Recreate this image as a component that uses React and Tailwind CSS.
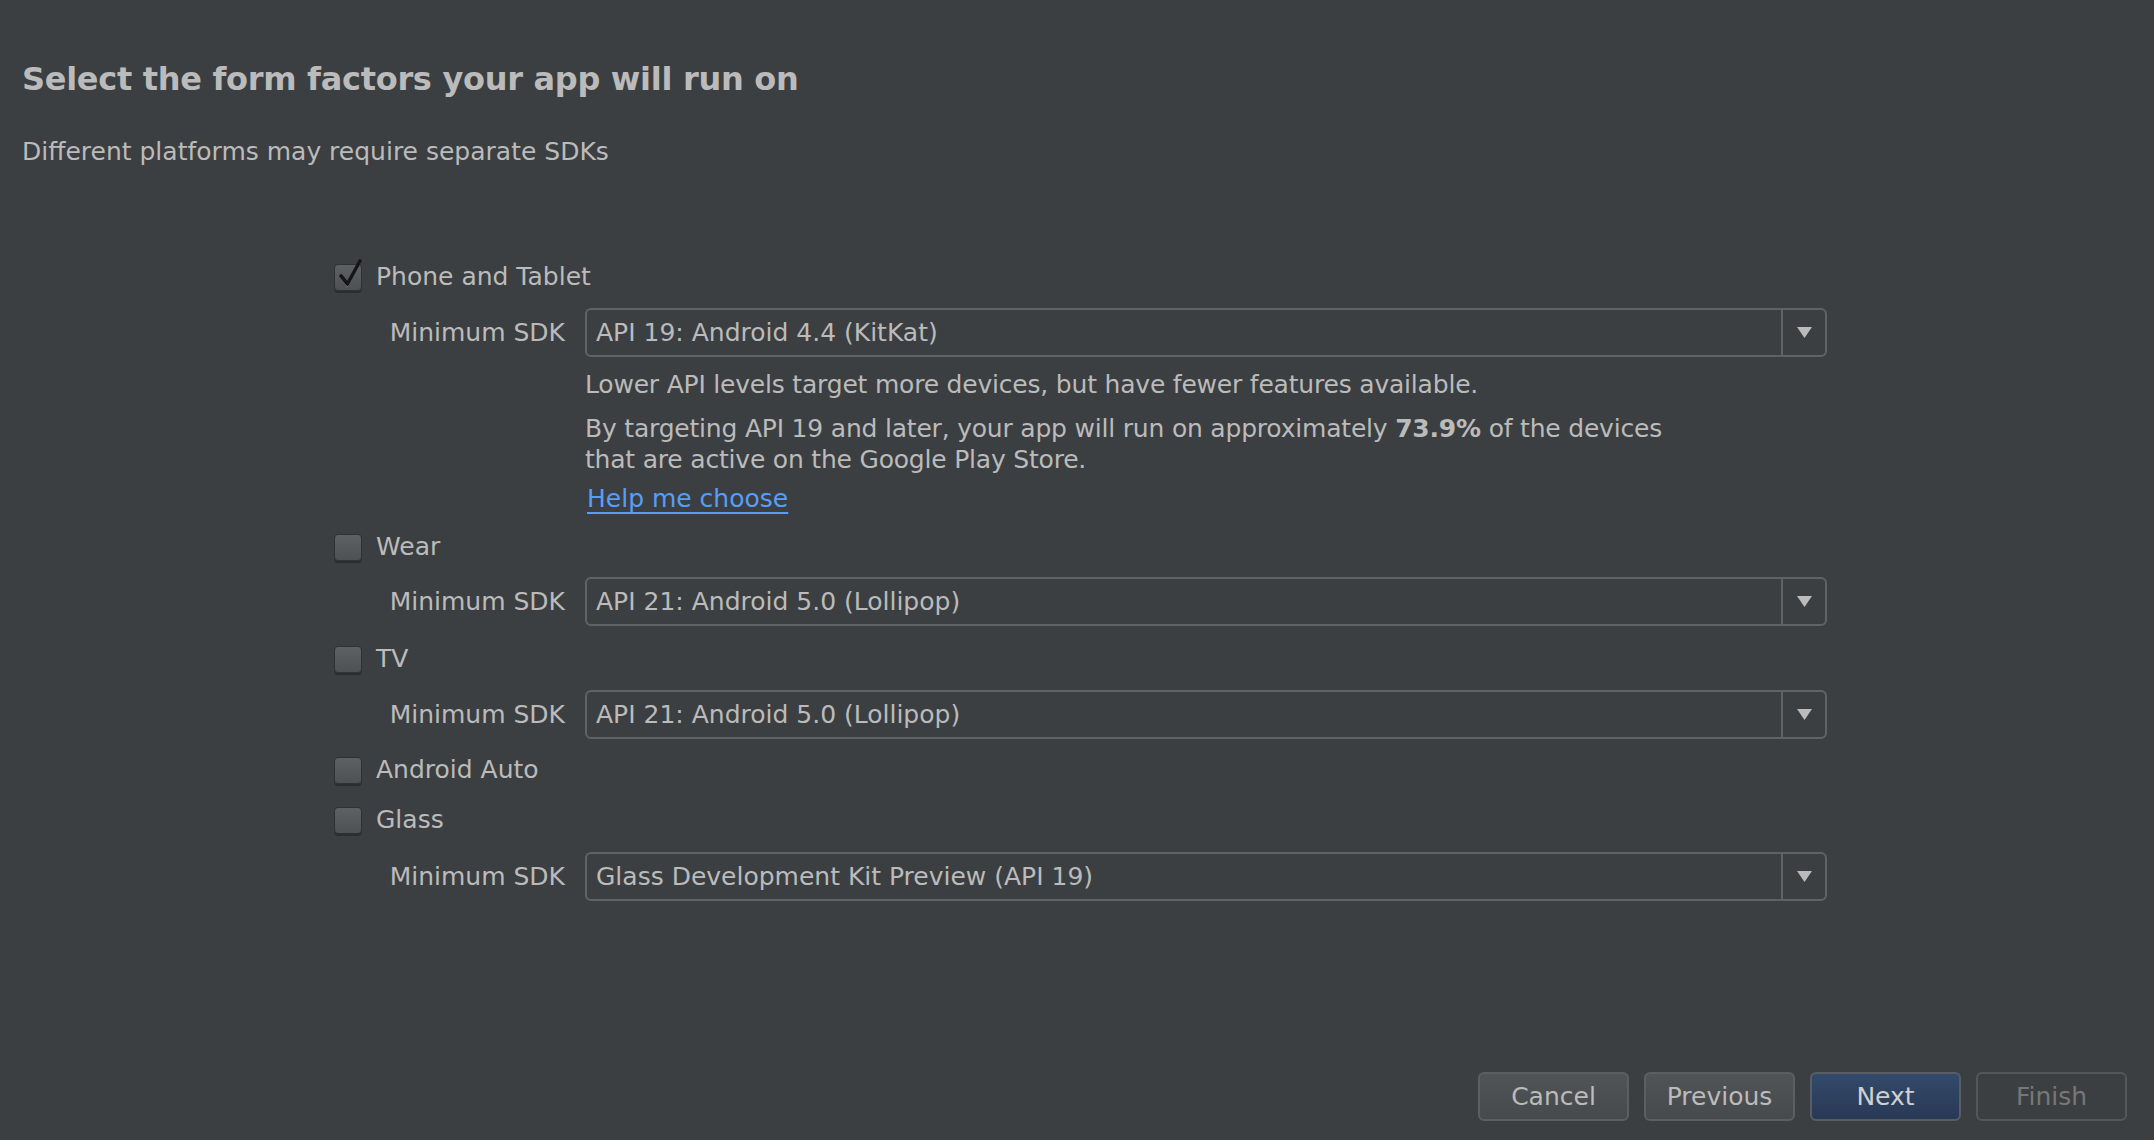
import React from 'react';

const font = { fontFamily: '"DejaVu Sans", "Liberation Sans", sans-serif' };

const Checkbox = ({ checked }) => (
  <div className="relative w-[28px] h-[27px] rounded-[4px] border border-[#2f3133] bg-gradient-to-b from-[#5e6163] to-[#4e5153] shadow-[0_2px_0_#2b2d2e]">
    {checked && (
      <svg className="absolute left-[3px] -top-[7px]" width="26" height="31" viewBox="0 0 26 31">
        <path d="M3 18 L9.5 26 L22 3" fill="none" stroke="#e6e6e6" strokeWidth="2" strokeLinejoin="round" transform="translate(0 1.5)" opacity="0.45" />
        <path d="M3 18 L9.5 26 L22 3" fill="none" stroke="#151617" strokeWidth="3.6" strokeLinecap="round" strokeLinejoin="round" />
      </svg>
    )}
  </div>
);

const FactorRow = ({ label, checked }) => (
  <div className="h-10 flex items-center gap-[14px]">
    <Checkbox checked={checked} />
    <span className="text-[25px] text-[#bbbbbb]">{label}</span>
  </div>
);

const SdkCombo = ({ value }) => (
  <div className="grid grid-cols-[231px_1242px] gap-x-[20px] items-center">
    <span className="text-[25px] text-[#bbbbbb] text-right">Minimum SDK</span>
    <div className="h-[49px] flex items-stretch rounded-[6px] border-2 border-[#606365] bg-[#3c3f41]">
      <div className="flex-1 flex items-center pl-[9px] text-[25px] text-[#bbbbbb]">{value}</div>
      <div className="w-[44px] border-l-2 border-[#606365] flex items-center justify-center">
        <svg width="15" height="11" viewBox="0 0 15 11">
          <path d="M0 0 H15 L7.5 11 Z" fill="#bbbbbb" />
        </svg>
      </div>
    </div>
  </div>
);

const Button = ({ children, variant }) => {
  const styles = {
    normal: 'border-[#5c5f61] bg-gradient-to-b from-[#505456] to-[#474a4c] text-[#bbbbbb]',
    primary: 'border-[#585e66] bg-gradient-to-b from-[#334a6b] to-[#283955] text-[#d0d0d0]',
    disabled: 'border-[#54575a] bg-[#3c3f41] text-[#777777]',
  };
  return (
    <button className={`w-[151px] h-[49px] rounded-[6px] border-2 text-[25px] ${styles[variant]}`}>
      {children}
    </button>
  );
};

export default function App() {
  return (
    <div className="w-[2154px] h-[1140px] bg-[#3c3f41] flex flex-col overflow-hidden" style={font}>
      {/* Header */}
      <div className="pl-[22px]">
        <h1 className="mt-[59px] leading-[40px] text-[32px] font-bold text-[#bbbbbb] tracking-[-0.3px]">
          Select the form factors your app will run on
        </h1>
        <p className="mt-[38px] leading-[30px] text-[25px] text-[#bbbbbb]">
          Different platforms may require separate SDKs
        </p>
      </div>

      {/* Form factors */}
      <div className="pl-[334px] mt-[90px] w-[1827px]">
        <FactorRow label="Phone and Tablet" checked />
        <div className="mt-[11px]">
          <SdkCombo value="API 19: Android 4.4 (KitKat)" />
        </div>
        <div className="ml-[251px] text-[25px] text-[#bbbbbb] tracking-[-0.2px]">
          <p className="mt-[13px] leading-[30px]">
            Lower API levels target more devices, but have fewer features available.
          </p>
          <p className="mt-[13px] leading-[31px]">
            By targeting API 19 and later, your app will run on approximately <span className="font-bold">73.9%</span> of the devices
            <br />
            that are active on the Google Play Store.
          </p>
          <p className="mt-[9px] leading-[30px] pl-[2px] tracking-normal">
            <a href="#" className="text-[#589df6] underline decoration-2 underline-offset-[5px]">Help me choose</a>
          </p>
        </div>

        <div className="mt-[13px]">
          <FactorRow label="Wear" />
        </div>
        <div className="mt-[10px]">
          <SdkCombo value="API 21: Android 5.0 (Lollipop)" />
        </div>

        <div className="mt-[13px]">
          <FactorRow label="TV" />
        </div>
        <div className="mt-[11px]">
          <SdkCombo value="API 21: Android 5.0 (Lollipop)" />
        </div>

        <div className="mt-[11px]">
          <FactorRow label="Android Auto" />
        </div>
        <div className="mt-[10px]">
          <FactorRow label="Glass" />
        </div>
        <div className="mt-[12px]">
          <SdkCombo value="Glass Development Kit Preview (API 19)" />
        </div>
      </div>

      {/* Footer buttons */}
      <div className="mt-auto mb-[19px] pr-[27px] flex justify-end gap-[15px]">
        <Button variant="normal">Cancel</Button>
        <Button variant="normal">Previous</Button>
        <Button variant="primary">Next</Button>
        <Button variant="disabled">Finish</Button>
      </div>
    </div>
  );
}
